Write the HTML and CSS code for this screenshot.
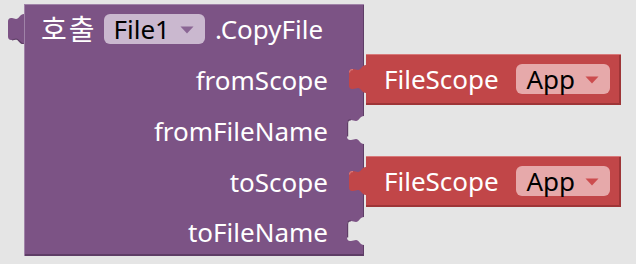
FILE: index.html
```html
<!DOCTYPE html>
<html>
<head>
  <meta charset="UTF-8">
  <title>CopyFile block</title>
  <link rel="stylesheet" href="styles.css">
</head>
<body>
  <div class="workspace">
    <div class="block">
      <!-- previous-statement tab on the left side -->
      <svg class="side-tab" width="16" height="30" viewBox="0 0 16 30">
        <path d="M16 0 C12 0 11 5 8 5 L4 4 C1.5 3.5 0 5 0 7.5 L0 22.5 C0 25 1.5 26.5 4 26 L8 25 C11 25 12 30 16 30 Z" fill="#7c5385"/>
        <path d="M4 26 L8 25 C11 25 12 30 16 30" fill="none" stroke="#5e3d66" stroke-width="1.2"/>
      </svg>

      <div class="row head">
        <span class="word kw">호출</span>
        <span class="dropdown dd-purple">File1
          <svg class="arrow" width="14" height="8" viewBox="0 0 14 8"><path d="M0.5 0.5 L13.5 0.5 L7 7.5 Z" fill="#8a6594"/></svg>
        </span>
        <span class="word">.CopyFile</span>
      </div>

      <div class="row">
        <div class="label-cell">fromScope</div>
        <div class="value">
          <svg class="value-tab" width="17" height="28" viewBox="0 0 17 28">
            <path d="M17 0 C13 0 12 5 9 5 L4 4 C1.5 3.5 0 5 0 7.5 L0 20.5 C0 23 1.5 24.5 4 24 L9 23 C12 23 13 28 17 28 Z" fill="#c14648"/>
            <path d="M0.6 7.5 C0.6 5.5 1.8 4.2 4 4.6" fill="none" stroke="#d97a7b" stroke-width="1.2"/>
          </svg>
          <span class="word">FileScope</span>
          <span class="dropdown dd-red">App
            <svg class="arrow" width="14" height="8" viewBox="0 0 14 8"><path d="M0.5 0.5 L13.5 0.5 L7 7.5 Z" fill="#cc4c4e"/></svg>
          </span>
        </div>
      </div>

      <div class="row">
        <div class="label-cell">fromFileName
          <svg class="notch" width="17" height="28" viewBox="0 0 17 28">
            <path d="M17 0 C13 0 12 5 9 5 L4 4 C1.5 3.5 0 5 0 7.5 L0 20.5 C0 23 1.5 24.5 4 24 L9 23 C12 23 13 28 17 28 Z" fill="#e5e5e5"/>
            <path d="M4 4 C1.5 3.5 0.6 5 0.6 7.5 L0.6 20.5" fill="none" stroke="#5e3d66" stroke-width="1.2"/>
          </svg>
        </div>
      </div>

      <div class="row">
        <div class="label-cell">toScope</div>
        <div class="value">
          <svg class="value-tab" width="17" height="28" viewBox="0 0 17 28">
            <path d="M17 0 C13 0 12 5 9 5 L4 4 C1.5 3.5 0 5 0 7.5 L0 20.5 C0 23 1.5 24.5 4 24 L9 23 C12 23 13 28 17 28 Z" fill="#c14648"/>
            <path d="M0.6 7.5 C0.6 5.5 1.8 4.2 4 4.6" fill="none" stroke="#d97a7b" stroke-width="1.2"/>
          </svg>
          <span class="word">FileScope</span>
          <span class="dropdown dd-red">App
            <svg class="arrow" width="14" height="8" viewBox="0 0 14 8"><path d="M0.5 0.5 L13.5 0.5 L7 7.5 Z" fill="#cc4c4e"/></svg>
          </span>
        </div>
      </div>

      <div class="row last">
        <div class="label-cell">toFileName
          <svg class="notch" width="17" height="28" viewBox="0 0 17 28">
            <path d="M17 0 C13 0 12 5 9 5 L4 4 C1.5 3.5 0 5 0 7.5 L0 20.5 C0 23 1.5 24.5 4 24 L9 23 C12 23 13 28 17 28 Z" fill="#e5e5e5"/>
            <path d="M4 4 C1.5 3.5 0.6 5 0.6 7.5 L0.6 20.5" fill="none" stroke="#5e3d66" stroke-width="1.2"/>
          </svg>
        </div>
      </div>
    </div>
  </div>
</body>
</html>
```

FILE: styles.css
```css
body {
  margin: 0;
  background-color: #e5e5e5;
  font-family: "Noto Sans", "Noto Sans CJK KR", sans-serif;
  font-size: 26px;
  color: #fff;
}

.workspace {
  padding: 4px 0 0 24px;
}

.block {
  position: relative;
  width: 340px;
  background-color: #7c5385;
  box-shadow: inset 1px 1px 0 #a083a8, inset -1px -2px 0 #5e3d66;
}

.side-tab {
  position: absolute;
  left: -16px;
  top: 10px;
}

.row {
  display: flex;
  align-items: center;
  height: 51px;
}

.row.head {
  height: 50px;
  padding-left: 17px;
  gap: 9px;
}

.row.head .dropdown {
  margin-right: 1px;
}

.row.last {
  height: 49px;
}

.word {
  white-space: nowrap;
  line-height: 1;
}

.kw {
  font-size: 28px;
  letter-spacing: 2px;
  margin-right: -2px;
}

.dropdown {
  display: flex;
  align-items: center;
  gap: 10px;
  height: 30px;
  box-sizing: border-box;
  padding: 0 11px 0 10px;
  border-radius: 6px;
  color: #000;
  line-height: 1;
  white-space: nowrap;
}

.dd-purple {
  background-color: #cab8cf;
}

.dd-red {
  background-color: #e6a9aa;
}

.arrow {
  margin-top: 2px;
}

.label-cell {
  position: relative;
  flex: 0 0 340px;
  box-sizing: border-box;
  padding-right: 36px;
  text-align: right;
  line-height: 1;
  white-space: nowrap;
}

.notch {
  position: absolute;
  right: 0;
  top: 50%;
  margin-top: -15px;
}

.value {
  position: relative;
  flex-shrink: 0;
  display: flex;
  align-items: center;
  gap: 11px;
  margin-left: 2px;
  height: 51px;
  box-sizing: border-box;
  width: 255px;
  padding: 0 11px 2px 18px;
  background-color: #c14648;
  box-shadow: inset 0 1px 0 #d8797a, inset -2px -2px 0 #9e3537;
}

.value .dropdown {
  margin-left: auto;
}

.value-tab {
  position: absolute;
  left: -17px;
  top: 11px;
}
```
